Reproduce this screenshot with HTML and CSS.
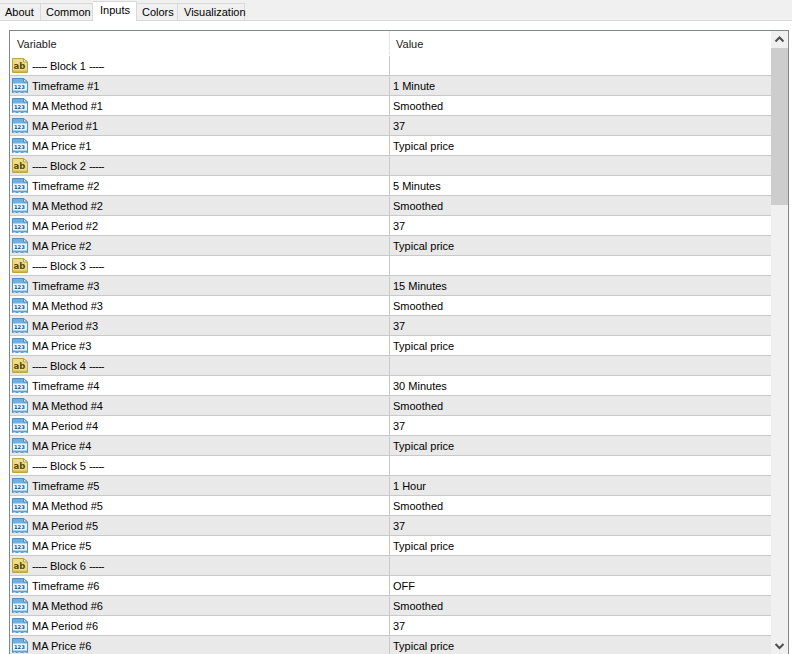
FILE: index.html
```html
<!DOCTYPE html>
<html lang="en">
<head>
<meta charset="utf-8">
<title>Inputs</title>
<link rel="stylesheet" href="styles.css">
</head>
<body>
<svg class="defs" width="0" height="0" aria-hidden="true">
  <symbol id="i-ab" viewBox="0 0 16 15">
    <path d="M0.5 0.5H11.5L15.5 4V14.5H0.5Z" fill="#ecdc82" stroke="#b9a548"/>
    <path d="M11.5 0.5V4H15.5Z" fill="#fff8cf" stroke="#b9a548"/>
    <rect x="1" y="12.5" width="14" height="1.5" fill="#cdb653"/>
    <text x="1.6" y="10.5" class="icon-ab">ab</text>
  </symbol>
  <symbol id="i-123" viewBox="0 0 16 15">
    <path d="M0.5 0.5H11.5L15.5 4V14.5L13 13.7L10 14.5L7.5 13.7L5 14.5L2.5 13.7L0.5 14.5Z" fill="#6fb0e3" stroke="#4d8fc6"/>
    <path d="M11.5 0.5V4H15.5Z" fill="#dff0fc" stroke="#4d8fc6"/>
    <rect x="1" y="5.5" width="14" height="7" fill="#eaf5fd"/>
    <text x="2" y="11.4" class="icon-num">123</text>
  </symbol>
</svg>
<nav class="tabs">
  <span class="tab">About</span>
  <span class="tab">Common</span>
  <span class="tab tab-active">Inputs</span>
  <span class="tab">Colors</span>
  <span class="tab">Visualization</span>
</nav>
<main class="panel">
  <div class="list">
    <div class="head"><span class="head-var">Variable</span><span class="head-val">Value</span></div>
    <div class="row"><div class="var"><svg class="icon"><use href="#i-ab"/></svg><span><span class="dash">-----</span> Block 1 <span class="dash">-----</span></span></div><div class="val"></div></div>
    <div class="row alt"><div class="var"><svg class="icon"><use href="#i-123"/></svg>Timeframe #1</div><div class="val">1 Minute</div></div>
    <div class="row"><div class="var"><svg class="icon"><use href="#i-123"/></svg>MA Method #1</div><div class="val">Smoothed</div></div>
    <div class="row alt"><div class="var"><svg class="icon"><use href="#i-123"/></svg>MA Period #1</div><div class="val">37</div></div>
    <div class="row"><div class="var"><svg class="icon"><use href="#i-123"/></svg>MA Price #1</div><div class="val">Typical price</div></div>
    <div class="row alt"><div class="var"><svg class="icon"><use href="#i-ab"/></svg><span><span class="dash">-----</span> Block 2 <span class="dash">-----</span></span></div><div class="val"></div></div>
    <div class="row"><div class="var"><svg class="icon"><use href="#i-123"/></svg>Timeframe #2</div><div class="val">5 Minutes</div></div>
    <div class="row alt"><div class="var"><svg class="icon"><use href="#i-123"/></svg>MA Method #2</div><div class="val">Smoothed</div></div>
    <div class="row"><div class="var"><svg class="icon"><use href="#i-123"/></svg>MA Period #2</div><div class="val">37</div></div>
    <div class="row alt"><div class="var"><svg class="icon"><use href="#i-123"/></svg>MA Price #2</div><div class="val">Typical price</div></div>
    <div class="row"><div class="var"><svg class="icon"><use href="#i-ab"/></svg><span><span class="dash">-----</span> Block 3 <span class="dash">-----</span></span></div><div class="val"></div></div>
    <div class="row alt"><div class="var"><svg class="icon"><use href="#i-123"/></svg>Timeframe #3</div><div class="val">15 Minutes</div></div>
    <div class="row"><div class="var"><svg class="icon"><use href="#i-123"/></svg>MA Method #3</div><div class="val">Smoothed</div></div>
    <div class="row alt"><div class="var"><svg class="icon"><use href="#i-123"/></svg>MA Period #3</div><div class="val">37</div></div>
    <div class="row"><div class="var"><svg class="icon"><use href="#i-123"/></svg>MA Price #3</div><div class="val">Typical price</div></div>
    <div class="row alt"><div class="var"><svg class="icon"><use href="#i-ab"/></svg><span><span class="dash">-----</span> Block 4 <span class="dash">-----</span></span></div><div class="val"></div></div>
    <div class="row"><div class="var"><svg class="icon"><use href="#i-123"/></svg>Timeframe #4</div><div class="val">30 Minutes</div></div>
    <div class="row alt"><div class="var"><svg class="icon"><use href="#i-123"/></svg>MA Method #4</div><div class="val">Smoothed</div></div>
    <div class="row"><div class="var"><svg class="icon"><use href="#i-123"/></svg>MA Period #4</div><div class="val">37</div></div>
    <div class="row alt"><div class="var"><svg class="icon"><use href="#i-123"/></svg>MA Price #4</div><div class="val">Typical price</div></div>
    <div class="row"><div class="var"><svg class="icon"><use href="#i-ab"/></svg><span><span class="dash">-----</span> Block 5 <span class="dash">-----</span></span></div><div class="val"></div></div>
    <div class="row alt"><div class="var"><svg class="icon"><use href="#i-123"/></svg>Timeframe #5</div><div class="val">1 Hour</div></div>
    <div class="row"><div class="var"><svg class="icon"><use href="#i-123"/></svg>MA Method #5</div><div class="val">Smoothed</div></div>
    <div class="row alt"><div class="var"><svg class="icon"><use href="#i-123"/></svg>MA Period #5</div><div class="val">37</div></div>
    <div class="row"><div class="var"><svg class="icon"><use href="#i-123"/></svg>MA Price #5</div><div class="val">Typical price</div></div>
    <div class="row alt"><div class="var"><svg class="icon"><use href="#i-ab"/></svg><span><span class="dash">-----</span> Block 6 <span class="dash">-----</span></span></div><div class="val"></div></div>
    <div class="row"><div class="var"><svg class="icon"><use href="#i-123"/></svg>Timeframe #6</div><div class="val">OFF</div></div>
    <div class="row alt"><div class="var"><svg class="icon"><use href="#i-123"/></svg>MA Method #6</div><div class="val">Smoothed</div></div>
    <div class="row"><div class="var"><svg class="icon"><use href="#i-123"/></svg>MA Period #6</div><div class="val">37</div></div>
    <div class="row alt"><div class="var"><svg class="icon"><use href="#i-123"/></svg>MA Price #6</div><div class="val">Typical price</div></div>
  </div>
  <div class="scrollbar">
    <div class="sb-btn"><svg width="17" height="17" viewBox="0 0 17 17"><path d="M4.5 10.5L8.5 6.5L12.5 10.5" fill="none" stroke="#505050" stroke-width="2"/></svg></div>
    <div class="sb-thumb"></div>
    <div class="sb-track"></div>
    <div class="sb-btn"><svg width="17" height="17" viewBox="0 0 17 17"><path d="M4.5 7L8.5 11L12.5 7" fill="none" stroke="#505050" stroke-width="2"/></svg></div>
  </div>
</main>
</body>
</html>
```
FILE: styles.css
```css
html, body {
  margin: 0;
  padding: 0;
  height: 654px;
  overflow: hidden;
  background: #ffffff;
  font-family: "Liberation Sans", Arial, sans-serif;
  font-size: 11px;
  color: #000;
}
.defs { display: none; }
.icon-ab { font: bold 8.5px "DejaVu Sans", sans-serif; fill: #5b4a10; }
.icon-num { font: bold 5.2px "DejaVu Sans", sans-serif; fill: #14508a; }
.dash { letter-spacing: -0.7px; }

.tabs {
  display: flex;
  align-items: flex-end;
  height: 20px;
  background: #f0f0f0;
  border-bottom: 1px solid #d9d9d9;
}
.tab {
  height: 17px;
  line-height: 17px;
  padding-left: 5px;
  border-right: 1px solid #d9d9d9;
  border-top: 1px solid #d9d9d9;
  background: #f0f0f0;
  box-sizing: border-box;
  white-space: nowrap;
}
.tab:nth-child(1) { width: 41px; }
.tab:nth-child(2) { width: 52px; }
.tab:nth-child(4) { width: 41px; }
.tab:nth-child(5) { width: 67px; padding-left: 6px; }
.tab-active {
  width: 44px;
  height: 20px;
  margin-bottom: -1px;
  padding-left: 7px;
  background: #fff;
  line-height: 16px;
  align-self: flex-start;
  margin-top: 1px;
}

.panel {
  display: flex;
  margin: 9px 3px 0 9px;
  height: 640px;
  border: 1px solid #82878f;
  border-bottom: 0;
  overflow: hidden;
  background: #fff;
}
.list { flex: 1; min-width: 0; }
.head {
  display: flex;
  height: 24px;
  line-height: 26px;
  color: #1a1a1a;
}
.head-var { width: 380px; box-sizing: border-box; padding-left: 7px; border-right: 1px solid #e5e5e5; }
.head-val { padding-left: 6px; }

.row {
  display: flex;
  height: 20px;
  box-sizing: border-box;
  line-height: 20px;
  background: #fff;
  border-top: 1px solid #c9c9c9;
}
.head + .row { border-top-color: #fff; }
.alt { background: #e9e9e9; }
.var {
  display: flex;
  align-items: center;
  width: 380px;
  box-sizing: border-box;
  padding-left: 2px;
  border-right: 1px solid #c9c9c9;
  white-space: nowrap;
}
.icon { width: 16px; height: 15px; margin-right: 4px; flex: none; }
.val { padding-left: 3px; white-space: nowrap; }

.scrollbar {
  width: 17px;
  display: flex;
  flex-direction: column;
  background: #f0f0f0;
  flex: none;
  height: 623px;
}
.sb-btn { height: 17px; flex: none; }
.sb-btn svg { display: block; }
.sb-thumb { height: 157px; background: #cdcdcd; flex: none; }
.sb-track { flex: 1; }
```
